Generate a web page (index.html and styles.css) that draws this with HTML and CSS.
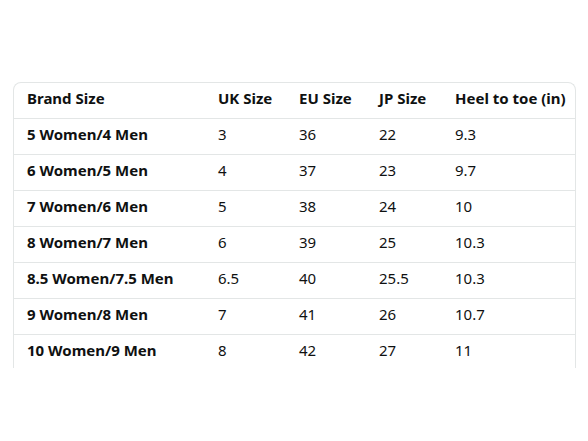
FILE: index.html
```html
<!DOCTYPE html>
<html lang="en">
<head>
    <meta charset="UTF-8">
    <title>Size chart</title>
    <link rel="stylesheet" href="styles.css">
</head>
<body>

<div class="chart">
    <table class="size-table">
        <colgroup>
            <col class="c-brand">
            <col class="c-uk">
            <col class="c-eu">
            <col class="c-jp">
            <col class="c-heel">
        </colgroup>
        <thead>
            <tr>
                <th>Brand Size</th>
                <th>UK Size</th>
                <th>EU Size</th>
                <th>JP Size</th>
                <th>Heel to toe (in)</th>
            </tr>
        </thead>
        <tbody>
            <tr><th>5 Women/4 Men</th><td>3</td><td>36</td><td>22</td><td>9.3</td></tr>
            <tr><th>6 Women/5 Men</th><td>4</td><td>37</td><td>23</td><td>9.7</td></tr>
            <tr><th>7 Women/6 Men</th><td>5</td><td>38</td><td>24</td><td>10</td></tr>
            <tr><th>8 Women/7 Men</th><td>6</td><td>39</td><td>25</td><td>10.3</td></tr>
            <tr><th>8.5 Women/7.5 Men</th><td>6.5</td><td>40</td><td>25.5</td><td>10.3</td></tr>
            <tr><th>9 Women/8 Men</th><td>7</td><td>41</td><td>26</td><td>10.7</td></tr>
            <tr><th>10 Women/9 Men</th><td>8</td><td>42</td><td>27</td><td>11</td></tr>
        </tbody>
    </table>
</div>

</body>
</html>
```

FILE: styles.css
```css
body {
    margin: 0;
    background: #fff;
    color: #0f1111;
    font-family: "Noto Sans", "Open Sans", sans-serif;
}
.chart {
    margin: 82px 12px 0 13px;
    height: 285px;
    overflow: hidden;
    border: 1px solid #e3e6e6;
    border-bottom: none;
    border-radius: 8px 8px 0 0;
}
.size-table {
    width: 100%;
    border-collapse: collapse;
    table-layout: fixed;
    font-size: 15px;
    line-height: 20px;
}
.c-brand { width: 191px; }
.c-uk { width: 81px; }
.c-eu { width: 80px; }
.c-jp { width: 76px; }
.size-table th,
.size-table td {
    box-sizing: border-box;
    height: 36px;
    padding: 0 0 5px 13px;
    text-align: left;
    white-space: nowrap;
    border-bottom: 1px solid #e3e6e6;
}
.size-table thead th {
    height: 35px;
}
.size-table th {
    font-weight: 700;
}
.size-table td {
    font-weight: 400;
}
```
